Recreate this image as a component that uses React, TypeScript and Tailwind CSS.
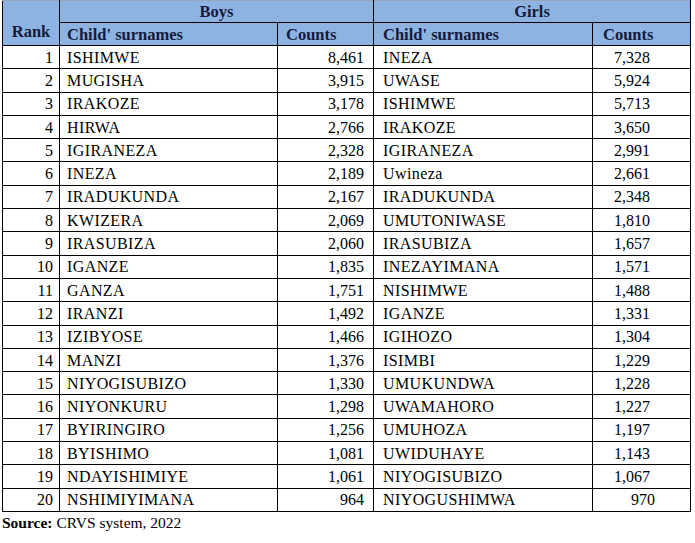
import React from "react";

const rows: [number, string, string, string, string][] = [
  [1, "ISHIMWE", "8,461", "INEZA", "7,328"],
  [2, "MUGISHA", "3,915", "UWASE", "5,924"],
  [3, "IRAKOZE", "3,178", "ISHIMWE", "5,713"],
  [4, "HIRWA", "2,766", "IRAKOZE", "3,650"],
  [5, "IGIRANEZA", "2,328", "IGIRANEZA", "2,991"],
  [6, "INEZA", "2,189", "Uwineza", "2,661"],
  [7, "IRADUKUNDA", "2,167", "IRADUKUNDA", "2,348"],
  [8, "KWIZERA", "2,069", "UMUTONIWASE", "1,810"],
  [9, "IRASUBIZA", "2,060", "IRASUBIZA", "1,657"],
  [10, "IGANZE", "1,835", "INEZAYIMANA", "1,571"],
  [11, "GANZA", "1,751", "NISHIMWE", "1,488"],
  [12, "IRANZI", "1,492", "IGANZE", "1,331"],
  [13, "IZIBYOSE", "1,466", "IGIHOZO", "1,304"],
  [14, "MANZI", "1,376", "ISIMBI", "1,229"],
  [15, "NIYOGISUBIZO", "1,330", "UMUKUNDWA", "1,228"],
  [16, "NIYONKURU", "1,298", "UWAMAHORO", "1,227"],
  [17, "BYIRINGIRO", "1,256", "UMUHOZA", "1,197"],
  [18, "BYISHIMO", "1,081", "UWIDUHAYE", "1,143"],
  [19, "NDAYISHIMIYE", "1,061", "NIYOGISUBIZO", "1,067"],
  [20, "NSHIMIYIMANA", "964", "NIYOGUSHIMWA", "970"],
];

export default function App() {
  return (
    <div className="w-[695px] h-[543px] bg-white text-black" style={{ fontFamily: '"Liberation Serif", "Times New Roman", serif' }}>
      <div className="pl-[2px]">
        <table className="border-collapse table-fixed w-[688px] text-[16px] leading-none">
          <colgroup>
            <col className="w-[57px]" />
            <col className="w-[218px]" />
            <col className="w-[96px]" />
            <col className="w-[219px]" />
            <col className="w-[98px]" />
          </colgroup>
          <thead className="bg-[#8db3e2] text-[#151b3b] font-bold text-[16.5px]">
            <tr className="h-[22px]">
              <th rowSpan={2} className="border border-black border-t-[#9aa6b8] align-bottom pb-[5px] text-center font-bold">
                Rank
              </th>
              <th colSpan={2} className="border border-black border-t-[#9aa6b8] text-center font-bold pt-[1px]">
                Boys
              </th>
              <th colSpan={2} className="border border-black border-t-[#9aa6b8] text-center font-bold pt-[1px]">
                Girls
              </th>
            </tr>
            <tr className="h-[23px]">
              <th className="border border-black text-left pl-[7px] pt-[2px] font-bold">Child' surnames</th>
              <th className="border border-black text-left pl-[8px] pt-[2px] font-bold">Counts</th>
              <th className="border border-black text-left pl-[9px] pt-[2px] font-bold">Child' surnames</th>
              <th className="border border-black text-left pl-[10px] pt-[2px] font-bold">Counts</th>
            </tr>
          </thead>
          <tbody>
            {rows.map((r) => (
              <tr key={r[0]} className="h-[23.3px]">
                <td className="border border-black text-right pr-[6px] pt-[1px]">{r[0]}</td>
                <td className="border border-black text-left pl-[7px] pt-[1px] tracking-[0.4px]">{r[1]}</td>
                <td className="border border-black text-right pr-[9px] pt-[1px]">{r[2]}</td>
                <td className="border border-black text-left pl-[9px] pt-[1px] tracking-[0.4px]">{r[3]}</td>
                <td className={r[0] === 20 ? "border border-black text-right pr-[35px] pt-[1px]" : "border border-black text-right pr-[40px] pt-[1px]"}>{r[4]}</td>
              </tr>
            ))}
          </tbody>
        </table>
      </div>
      <div className="pl-[2px] pt-[3px] text-[15.5px] leading-none">
        <span className="font-bold">Source:</span> CRVS system, 2022
      </div>
    </div>
  );
}
